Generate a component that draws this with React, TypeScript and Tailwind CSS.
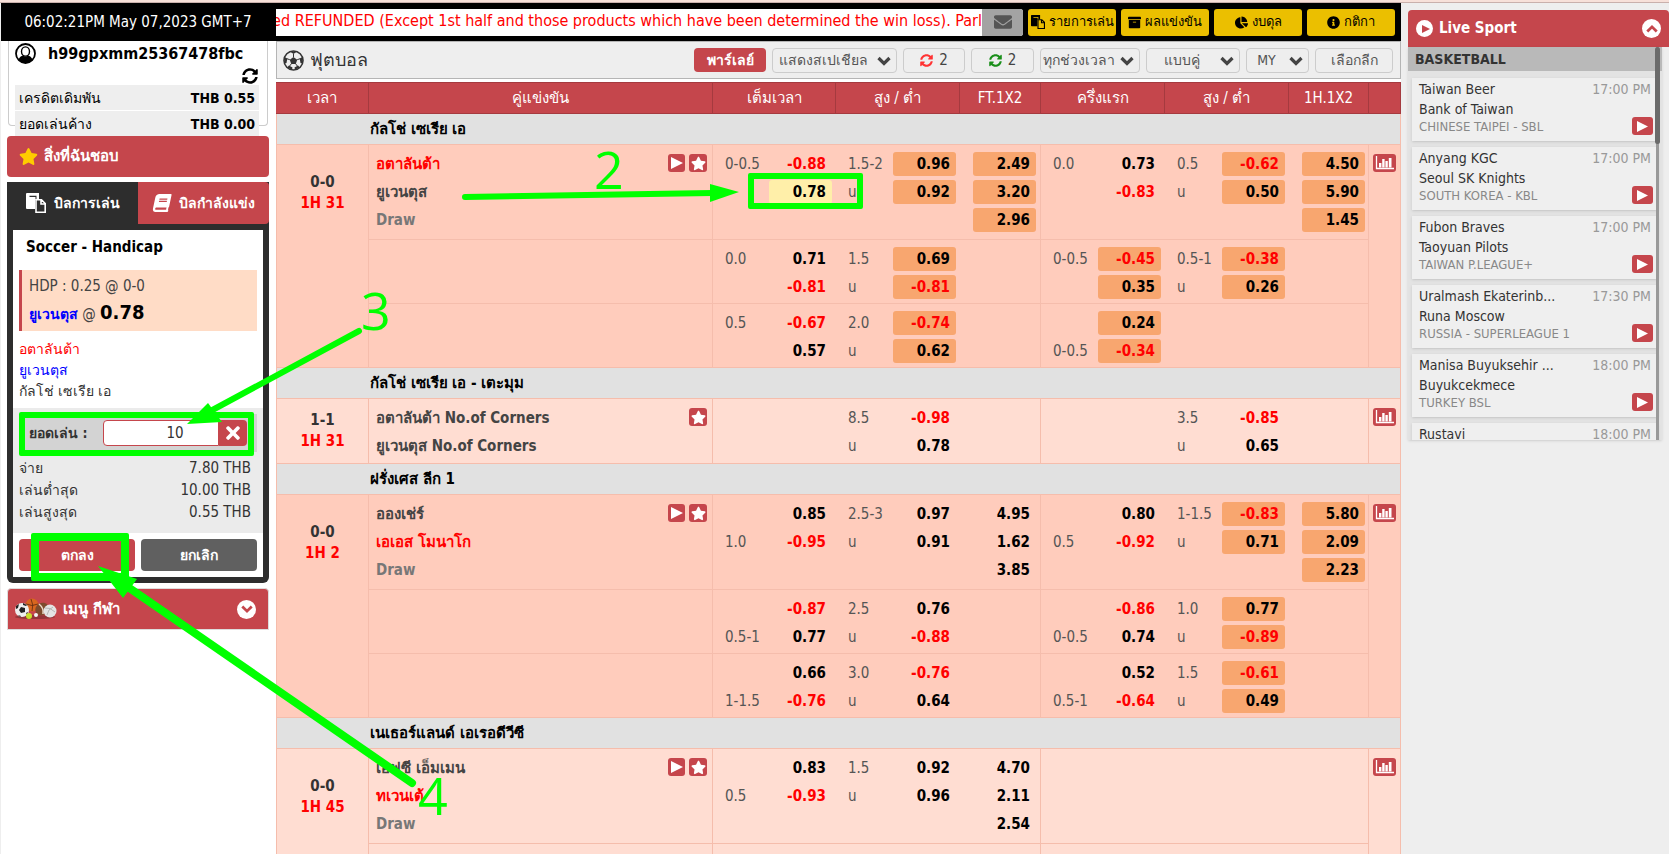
import React, { useState } from 'react';
import {
  FaArchive,
  FaBook,
  FaChartPie,
  FaEnvelope,
  FaInfoCircle,
  FaStar,
  FaSyncAlt,
  FaTimes,
} from 'react-icons/fa';

// [handicap, odds, highlighted]
type Line = [string, string, ('hot' | 'picked')?];

interface OddsRow {
  ft: Line[];
  ftOu: Line[];
  ftX: Line[];
  half: Line[];
  halfOu: Line[];
  halfX: Line[];
}

interface Match {
  score: string;
  time: string;
  home: string;
  away: string;
  favourite: 'home' | 'away' | 'none';
  draw: boolean;
  live: boolean;
  shade: 'dark' | 'light';
  rows: OddsRow[];
}

interface League {
  name: string;
  matches: Match[];
}

const LEAGUES: League[] = [
  {
    name: 'กัลโช่ เซเรีย เอ',
    matches: [
      {
        score: '0-0', time: '1H 31', home: 'อตาลันต้า', away: 'ยูเวนตุส', favourite: 'home', draw: true, live: true, shade: 'dark',
        rows: [
          {
            ft: [['0-0.5', '-0.88'], ['', '0.78', 'picked']],
            ftOu: [['1.5-2', '0.96', 'hot'], ['u', '0.92', 'hot']],
            ftX: [['', '2.49', 'hot'], ['', '3.20', 'hot'], ['', '2.96', 'hot']],
            half: [['0.0', '0.73'], ['', '-0.83']],
            halfOu: [['0.5', '-0.62', 'hot'], ['u', '0.50', 'hot']],
            halfX: [['', '4.50', 'hot'], ['', '5.90', 'hot'], ['', '1.45', 'hot']],
          },
          {
            ft: [['0.0', '0.71'], ['', '-0.81']],
            ftOu: [['1.5', '0.69', 'hot'], ['u', '-0.81', 'hot']],
            ftX: [],
            half: [['0-0.5', '-0.45', 'hot'], ['', '0.35', 'hot']],
            halfOu: [['0.5-1', '-0.38', 'hot'], ['u', '0.26', 'hot']],
            halfX: [],
          },
          {
            ft: [['0.5', '-0.67'], ['', '0.57']],
            ftOu: [['2.0', '-0.74', 'hot'], ['u', '0.62', 'hot']],
            ftX: [],
            half: [['', '0.24', 'hot'], ['0-0.5', '-0.34', 'hot']],
            halfOu: [],
            halfX: [],
          },
        ],
      },
    ],
  },
  {
    name: 'กัลโช่ เซเรีย เอ - เตะมุม',
    matches: [
      {
        score: '1-1', time: '1H 31', home: 'อตาลันต้า No.of Corners', away: 'ยูเวนตุส No.of Corners', favourite: 'none', draw: false, live: false, shade: 'light',
        rows: [
          {
            ft: [],
            ftOu: [['8.5', '-0.98'], ['u', '0.78']],
            ftX: [],
            half: [],
            halfOu: [['3.5', '-0.85'], ['u', '0.65']],
            halfX: [],
          },
        ],
      },
    ],
  },
  {
    name: 'ฝรั่งเศส ลีก 1',
    matches: [
      {
        score: '0-0', time: '1H 2', home: 'อองเช่ร์', away: 'เอเอส โมนาโก', favourite: 'away', draw: true, live: true, shade: 'dark',
        rows: [
          {
            ft: [['', '0.85'], ['1.0', '-0.95']],
            ftOu: [['2.5-3', '0.97'], ['u', '0.91']],
            ftX: [['', '4.95'], ['', '1.62'], ['', '3.85']],
            half: [['', '0.80'], ['0.5', '-0.92']],
            halfOu: [['1-1.5', '-0.83', 'hot'], ['u', '0.71', 'hot']],
            halfX: [['', '5.80', 'hot'], ['', '2.09', 'hot'], ['', '2.23', 'hot']],
          },
          {
            ft: [['', '-0.87'], ['0.5-1', '0.77']],
            ftOu: [['2.5', '0.76'], ['u', '-0.88']],
            ftX: [],
            half: [['', '-0.86'], ['0-0.5', '0.74']],
            halfOu: [['1.0', '0.77', 'hot'], ['u', '-0.89', 'hot']],
            halfX: [],
          },
          {
            ft: [['', '0.66'], ['1-1.5', '-0.76']],
            ftOu: [['3.0', '-0.76'], ['u', '0.64']],
            ftX: [],
            half: [['', '0.52'], ['0.5-1', '-0.64']],
            halfOu: [['1.5', '-0.61', 'hot'], ['u', '0.49', 'hot']],
            halfX: [],
          },
        ],
      },
    ],
  },
  {
    name: 'เนเธอร์แลนด์ เอเรอดีวีซี',
    matches: [
      {
        score: '0-0', time: '1H 45', home: 'เอฟซี เอ็มเมน', away: 'ทเวนเต้', favourite: 'away', draw: true, live: true, shade: 'light',
        rows: [
          {
            ft: [['', '0.83'], ['0.5', '-0.93']],
            ftOu: [['1.5', '0.92'], ['u', '0.96']],
            ftX: [['', '4.70'], ['', '2.11'], ['', '2.54']],
            half: [],
            halfOu: [],
            halfX: [],
          },
          { ft: [], ftOu: [], ftX: [], half: [], halfOu: [], halfX: [] },
        ],
      },
    ],
  },
];

const LIVE_GAMES = [
  { home: 'Taiwan Beer', away: 'Bank of Taiwan', league: 'CHINESE TAIPEI - SBL', time: '17:00 PM' },
  { home: 'Anyang KGC', away: 'Seoul SK Knights', league: 'SOUTH KOREA - KBL', time: '17:00 PM' },
  { home: 'Fubon Braves', away: 'Taoyuan Pilots', league: 'TAIWAN P.LEAGUE+', time: '17:00 PM' },
  { home: 'Uralmash Ekaterinb...', away: 'Runa Moscow', league: 'RUSSIA - SUPERLEAGUE 1', time: '17:30 PM' },
  { home: 'Manisa Buyuksehir ...', away: 'Buyukcekmece', league: 'TURKEY BSL', time: '18:00 PM' },
  { home: 'Rustavi', away: '', league: '', time: '18:00 PM' },
];

const PasteIcon: React.FC<{ size: number }> = ({ size }) => (
  <svg width={size} height={size} viewBox="0 0 20 20" className="shrink-0">
    <path d="M1 0h12v6h-2.500v-3.200h-7v1.200h6V7H9v9H1q-1 0-1-1V1q0-1 1-1z" fill="currentColor" />
    <path d="M10 6.800h5.500l3.700 3.700v8.700H10zM15 7v4h4" fill="none" stroke="currentColor" strokeWidth="1.600" />
  </svg>
);

const UserIcon = () => (
  <svg width="21" height="21" viewBox="0 0 21 21">
    <circle cx="10.500" cy="10.500" r="9.500" fill="#fff" stroke="#000" strokeWidth="1.800" />
    <path d="M3.500 16.500q1.500-3.500 4.500-4 2.500 2 5 0 3 .5 4.500 4-2.500 3.500-7 3.500t-7-3.500z" fill="#000" />
    <ellipse cx="10.500" cy="8.500" rx="4" ry="4.600" fill="#fff" stroke="#000" strokeWidth="1.400" />
  </svg>
);

const BallIcon = () => (
  <svg width="21" height="21" viewBox="0 0 21 21" className="text-[#333]">
    <circle cx="10.500" cy="10.500" r="9.500" fill="none" stroke="currentColor" strokeWidth="1.600" />
    <path d="m10.500 7 3.700 2.700-1.400 4.300H8.200L6.800 9.700z" fill="currentColor" />
    <path d="M10.500 7V4M14.200 9.700l3-1M12.800 14l2 2.600M8.200 14l-2 2.600M6.800 9.700l-3-1" stroke="currentColor" strokeWidth="1" />
    <path d="m7 1.500 3.500 2.500L14 1.500zM19.500 7l-2.800 1.500.8 4.500 2 .5zM17 17.500l-2-2-3.500 2 .5 2.300zM4 17.500l2-2 3.500 2-.5 2.300zM1.500 7l2.800 1.500-.8 4.500-2 .5z" fill="currentColor" />
  </svg>
);

const PlayIcon: React.FC<{ size: number }> = ({ size }) => (
  <svg width={size} height={size} viewBox="0 0 12 12" fill="currentColor">
    <path d="M0 0v12l12-6z" />
  </svg>
);

const Chevron: React.FC<{ size: number; className?: string }> = ({ size, className }) => (
  <svg width={size} height={size} viewBox="0 0 14 14" className={className}>
    <path d="M1.500 4 7 9.500 12.500 4" fill="none" stroke="currentColor" strokeWidth="3.200" />
  </svg>
);

const ChartIcon = () => (
  <svg width="23" height="18" viewBox="0 0 23 18" className="rounded-[3px] bg-[#c5464c]">
    <path d="M3.500 2v12.500H21" fill="none" stroke="#fff" strokeWidth="1.300" />
    <path d="M6 9h2.400v4.500H6zM9.200 5h2.400v8.500H9.200zM12.400 7h2.400v6.500h-2.400zM15.800 4h2.700v9.500h-2.700z" fill="#fff" />
  </svg>
);

const TOP_LINKS = [
  { label: 'รายการเล่น', icon: <PasteIcon size={14} /> },
  { label: 'ผลแข่งขัน', icon: <FaArchive size={13} /> },
  { label: 'งบดุล', icon: <FaChartPie size={13} /> },
  { label: 'กติกา', icon: <FaInfoCircle size={13} /> },
];

const OddsCell: React.FC<{ lines: Line[]; border?: boolean; pad?: string }> = ({ lines, border, pad = 'pr-1' }) => (
  <td className={`border-b border-[#f5bdac] p-0 align-top ${border ? 'border-r' : ''}`}>
    <div className={`flex flex-col gap-1 pt-[7px] pl-3 ${pad}`}>
      {lines.map(([hdp, odds, mark], i) => (
        <div key={i} className="flex h-6 items-center justify-between">
          <span className="text-[15px] leading-5 text-[#555]">{hdp}</span>
          <button
            type="button"
            className={`h-full w-[63px] rounded-[3px] pr-[6px] text-right text-[15px] font-bold ${
              mark === 'hot' ? 'bg-[#f8a66f]' : mark === 'picked' ? 'bg-[#ffefa9]' : ''
            } ${odds.startsWith('-') ? 'text-[#f00]' : 'text-black'}`}
          >
            {odds}
          </button>
        </div>
      ))}
    </div>
  </td>
);

const MatchRows: React.FC<{ match: Match }> = ({ match }) => {
  const bg = match.shade === 'dark' ? 'bg-[#ffccbc]' : 'bg-[#ffddd2]';
  return (
    <>
      {match.rows.map((row, i) => {
        const height = i === 0 && match.draw ? 'h-[95px]' : 'h-16';
        return (
          <tr key={i} className={`${bg} ${height}`}>
            {i === 0 && (
              <td rowSpan={match.rows.length} className="border-x border-b border-[#f5bdac] p-0 align-top">
                <div className={`flex flex-col items-center justify-center text-[15px] leading-[21px] font-bold ${height}`}>
                  <span className="text-[#333]">{match.score}</span>
                  <span className="text-[#f00]">{match.time}</span>
                </div>
              </td>
            )}
            <td className="border-r border-b border-[#f5bdac] p-0 align-top">
              {i === 0 && (
                <div className="flex justify-between pt-[5px] pr-[5px] pl-[7px]">
                  <div className="flex flex-col text-[15px] leading-7 font-bold text-[#444]">
                    <span className={match.favourite === 'home' ? 'text-[#f00]' : ''}>{match.home}</span>
                    <span className={match.favourite === 'away' ? 'text-[#f00]' : ''}>{match.away}</span>
                    {match.draw && <span className="text-[#777]">Draw</span>}
                  </div>
                  <div className="flex gap-1 pt-1">
                    {match.live && (
                      <button type="button" aria-label="Watch" className="flex h-[18px] w-[17px] items-center justify-center rounded-[3px] bg-[#c5464c] pl-px text-white">
                        <PlayIcon size={12} />
                      </button>
                    )}
                    <button type="button" aria-label="Favourite" className="flex h-[18px] w-[18px] items-center justify-center rounded-[3px] bg-[#c5464c] text-white">
                      <FaStar size={15} />
                    </button>
                  </div>
                </div>
              )}
            </td>
            <OddsCell lines={row.ft} />
            <OddsCell lines={row.ftOu} />
            <OddsCell lines={row.ftX} border />
            <OddsCell lines={row.half} />
            <OddsCell lines={row.halfOu} />
            <OddsCell lines={row.halfX} border pad="pr-[3px]" />
            {i === 0 && (
              <td rowSpan={match.rows.length} className="border-r border-b border-[#f5bdac] p-0 align-top">
                <button type="button" aria-label="Statistics" className="mt-[9px] ml-1 block">
                  <ChartIcon />
                </button>
              </td>
            )}
          </tr>
        );
      })}
    </>
  );
};

const Dropdown: React.FC<{ label: string; value: string; width: string }> = ({ label, value, width }) => (
  <div className={`relative h-[25px] ${width}`}>
    <select aria-label={label} className="h-full w-full appearance-none rounded border border-[#ccc] bg-[#eee] pr-[22px] text-center text-sm text-[#555]">
      <option>{value}</option>
    </select>
    <Chevron size={14} className="pointer-events-none absolute top-[6px] right-[6px] text-[#444]" />
  </div>
);

const BallsIcon = () => (
  <svg width="43" height="22" viewBox="0 0 43 22">
    <ellipse cx="21" cy="19" rx="20" ry="2" fill="#000" opacity=".25" />
    <circle cx="18" cy="7" r="6.500" fill="#d9661f" />
    <path d="M12 6q6 3 12 0M17 1q3 6 1 12" fill="none" stroke="#5c2a10" strokeWidth=".8" />
    <ellipse cx="28" cy="11" rx="7" ry="6" fill="#7d4a2c" transform="rotate(-30 28 11)" />
    <path d="M25 6q5 4 4 10" fill="none" stroke="#ead9c8" strokeWidth="1.500" />
    <circle cx="8" cy="12" r="7" fill="#eee" />
    <path d="m7 9 4 1 0 4-4 1-2-3zM2 8l3-2-1 4-2 1zM9 5l4 2-1 1-3-1zM4 17l3 1-1 1zM12 15l2-1-1 3z" fill="#222" />
    <circle cx="36" cy="13" r="6.500" fill="#e4e4e4" />
    <path d="M31 10q5-1 10 4M33 17q1-6 6-8" fill="none" stroke="#aaa" strokeWidth=".8" />
    <circle cx="15" cy="18" r="3" fill="#c8e02a" />
    <circle cx="22" cy="17" r="2" fill="#f4f4f4" />
  </svg>
);

const BetSlip: React.FC = () => {
  const [stake, setStake] = useState('10');

  return (
    <section className="mt-[5px] rounded-b-md bg-[#2d2d2d] pb-[6px]">
      <div className="flex h-[42px] overflow-hidden rounded-t text-sm font-bold text-white">
        <button type="button" className="flex flex-1 items-center justify-center gap-2 bg-[#2d2d2d]">
          <PasteIcon size={20} />บิลการเล่น
        </button>
        <button type="button" className="flex flex-1 items-center justify-center gap-2 rounded-br bg-[#c5464c]">
          <FaBook size={18} className="-skew-x-12" />บิลกำลังแข่ง
        </button>
      </div>
      <div className="mx-[6px] mt-[6px] bg-white">
        <h2 className="h-10 pl-[13px] text-[15px] leading-[34px] font-bold text-black">Soccer - Handicap</h2>
        <div className="mx-[6px] h-[61px] border-l-[3px] border-[#c5464c] bg-[#ffdcc6] pl-[7px] text-[#444]">
          <p className="pt-1 text-[15px] leading-6">HDP : 0.25 @ 0-0</p>
          <p className="text-[15px] leading-7">
            <b className="text-[14px] text-[#00f]">ยูเวนตุส</b> @ <b className="text-xl leading-7 text-black">0.78</b>
          </p>
        </div>
        <div className="flex h-[77px] flex-col pt-2 pl-[6px] text-sm leading-[21px] text-[#333]">
          <span className="text-[#f00]">อตาลันต้า</span>
          <span className="text-[#00f]">ยูเวนตุส</span>
          <span>กัลโช่ เซเรีย เอ</span>
        </div>
        <div className="bg-[#ebebeb] px-[6px] pt-[6px] pb-[10px]">
          <div className="flex h-[38px] items-center bg-[#d3d3d3] pr-[10px] pl-[10px]">
            <label htmlFor="stake" className="w-[74px] text-sm font-bold whitespace-nowrap text-[#333]">ยอดเล่น :</label>
            <input
              id="stake"
              value={stake}
              onChange={(e) => setStake(e.target.value)}
              className="h-[26px] min-w-0 flex-1 rounded-l border border-[#c5464c] bg-white pl-7 text-center text-[15px] text-[#333]"
            />
            <button type="button" aria-label="Clear" onClick={() => setStake('')} className="flex h-[26px] w-7 items-center justify-center rounded-r bg-[#c5464c] text-white">
              <FaTimes size={20} />
            </button>
          </div>
          <dl className="grid grid-cols-[auto_1fr] pt-[5px] pr-[6px] text-sm leading-[22px] text-[#333]">
            <dt>จ่าย</dt>
            <dd className="text-right text-[15px]">7.80 THB</dd>
            <dt>เล่นต่ำสุด</dt>
            <dd className="text-right text-[15px]">10.00 THB</dd>
            <dt>เล่นสูงสุด</dt>
            <dd className="text-right text-[15px]">0.55 THB</dd>
          </dl>
        </div>
        <div className="grid h-[44px] grid-cols-2 gap-[6px] p-[6px] text-sm font-bold text-white">
          <button type="button" className="rounded bg-[#c5464c]">ตกลง</button>
          <button type="button" className="rounded bg-[#606060]">ยกเลิก</button>
        </div>
      </div>
    </section>
  );
};

const LiveSport: React.FC = () => (
  <aside className="w-[268px] shrink-0 pt-[7px] pl-[7px]">
    <header className="flex h-[37px] items-center gap-[6px] rounded-t bg-[#c5464c] pr-2 pl-2 text-white">
      <span className="flex h-[17px] w-[17px] items-center justify-center rounded-full bg-white pl-[2px] text-[#c5464c]">
        <PlayIcon size={8} />
      </span>
      <h2 className="flex-1 text-[15px] font-bold">Live Sport</h2>
      <button type="button" aria-label="Collapse" className="flex h-[19px] w-[19px] items-center justify-center rounded-full bg-white text-[#c5464c]">
        <Chevron size={12} className="rotate-180" />
      </button>
    </header>
    <div className="relative mr-[7px] h-[393px] overflow-hidden bg-[#e3e3e3] shadow">
      <h3 className="h-6 bg-[#b9b9b9] pl-[7px] text-sm leading-6 font-bold text-[#333]">BASKETBALL</h3>
      <ul className="flex flex-col gap-[6px] px-1 pt-[7px]">
        {LIVE_GAMES.map((game) => (
          <li key={game.home} className="flex h-[63px] shrink-0 justify-between bg-[#efefef] pr-[5px] pl-[7px] shadow-sm">
            <div className="pt-px text-sm leading-5 text-[#333]">
              <p>{game.home}</p>
              <p>{game.away}</p>
              <p className="text-[13px] leading-4 text-[#888]">{game.league}</p>
            </div>
            <div className="flex flex-col items-end justify-between pt-px pb-[6px]">
              <span className="pr-[2px] text-sm leading-5 text-[#999]">{game.time}</span>
              <button type="button" aria-label="Play" className="flex h-[18px] w-[21px] items-center justify-center rounded-[3px] bg-[#c5464c] text-white">
                <PlayIcon size={11} />
              </button>
            </div>
          </li>
        ))}
      </ul>
      {/* scrollbar */}
      <div className="absolute top-0 right-[2px] flex h-full w-[5px] justify-center">
        <div className="h-full w-[3px] bg-[#999]" />
        <div className="absolute top-0 h-[97px] w-[5px] rounded bg-[#6b6b6b]" />
      </div>
    </div>
  </aside>
);

const Guide: React.FC = () => (
  <div className="pointer-events-none absolute inset-0 font-['Open_Sans',sans-serif] text-[52px] leading-none font-medium text-[#0f0]">
    <svg className="absolute top-0 left-0" width="900" height="854" fill="#0f0" stroke="#0f0" strokeLinecap="round">
      <path d="M465 197 712 193" strokeWidth="6" />
      <path d="M710 184 739 192 710 202z" stroke="none" />
      <path d="M359 331 205 414" strokeWidth="6" />
      <path d="M208 403 187 424 222 422z" stroke="none" />
      <path d="M412 783 125 585" strokeWidth="8" />
      <path d="M98 566 137 579 123 598z" stroke="none" />
    </svg>
    <div className="absolute top-[173px] left-[748px] h-9 w-[115px] rounded-[2px] border-[6px] border-[#0f0]" />
    <div className="absolute top-[412px] left-[19px] h-[44px] w-[235px] rounded-[2px] border-[6px] border-[#0f0]" />
    <div className="absolute top-[533px] left-[31px] h-[48px] w-[98px] rounded-[2px] border-8 border-[#0f0]" />
    <span className="absolute top-[143px] left-[594px]">2</span>
    <span className="absolute top-[284px] left-[361px]">3</span>
    <span className="absolute top-[769px] left-[418px]">4</span>
  </div>
);

const App: React.FC = () => (
  <div className="relative flex h-screen flex-col overflow-hidden bg-[#eee] font-['DejaVu_Sans_Condensed','Noto_Sans',sans-serif]">
    <div className="h-[3px] shrink-0 border-b border-[#c9b0ac] bg-[#f7e0d9]" />
    <div className="flex min-h-0 flex-1">
      <div className="ml-px flex min-w-0 flex-1 flex-col bg-white">
        <header className="flex h-[38px] shrink-0 items-center gap-[5px] bg-black pr-[6px]">
          <time className="w-[270px] shrink-0 pl-1 text-center text-[15px] font-medium text-white">06:02:21PM May 07,2023 GMT+7</time>
          <div className="flex h-[27px] min-w-0 flex-1 overflow-hidden rounded-r-[3px] bg-white">
            <p className="flex min-w-0 flex-1 justify-end overflow-hidden text-base leading-6 whitespace-nowrap text-[#f00]">
              ed REFUNDED (Except 1st half and those products which have been determined the win loss). Parl
            </p>
            <button type="button" aria-label="Messages" className="flex w-[41px] shrink-0 items-center justify-center bg-[#a3a3a3] text-[#555]">
              <FaEnvelope size={18} />
            </button>
          </div>
          <nav className="grid shrink-0 grid-cols-4 gap-[5px]">
            {TOP_LINKS.map((link) => (
              <a key={link.label} href="#" className="flex h-[27px] w-[88px] items-center justify-center gap-1 rounded-[3px] bg-[#ebbf00] text-[13px] whitespace-nowrap text-black">
                {link.icon}
                {link.label}
              </a>
            ))}
          </nav>
        </header>

        <div className="flex min-h-0 flex-1">
          <aside className="w-[275px] shrink-0 pr-[7px] pl-[6px]">
            <div className="h-[95px]">
              <div className="mx-px h-[85px] rounded-b border-x border-b border-[#ccc] px-[6px]">
                <div className="flex h-[25px] items-center gap-3 text-base font-bold text-black">
                  <UserIcon />h99gpxmm25367478fbc
                </div>
                <div className="flex h-[19px] justify-end pr-[3px]">
                  <button type="button" aria-label="Refresh"><FaSyncAlt size={16} /></button>
                </div>
                <dl className="relative flex flex-col gap-px pr-[2px] text-sm text-black">
                  <div className="flex h-[25px] items-center justify-between bg-[#eee] px-1">
                    <dt>เครดิตเดิมพัน</dt>
                    <dd className="font-bold">THB 0.55</dd>
                  </div>
                  <div className="flex h-[25px] items-center justify-between bg-[#eee] px-1">
                    <dt>ยอดเล่นค้าง</dt>
                    <dd className="font-bold">THB 0.00</dd>
                  </div>
                </dl>
              </div>
            </div>
            <button type="button" className="flex h-[41px] w-full items-center gap-[6px] rounded bg-[#c5464c] pl-3 text-[15px] font-bold text-white">
              <FaStar size={19} className="text-[#fc0]" />สิ่งที่ฉันชอบ
            </button>
            <BetSlip />
            <button type="button" className="mt-[5px] flex h-[42px] w-full items-center gap-[6px] rounded-t border border-[#ddd] bg-[#c5464c] pr-3 pl-[6px] text-[15px] font-bold text-white">
              <BallsIcon />
              <span className="flex-1 text-left">เมนู กีฬา</span>
              <span className="flex h-[19px] w-[19px] items-center justify-center rounded-full bg-white text-[#c5464c]">
                <Chevron size={12} />
              </span>
            </button>
          </aside>

          <main className="min-w-0 flex-1">
            <div className="flex h-[38px] items-center gap-[6px] border border-[#b5b5b5] bg-[#eee] pr-[7px] pl-[6px]">
              <BallIcon />
              <h1 className="flex-1 text-lg leading-6 font-medium text-[#333]">ฟุตบอล</h1>
              <button type="button" className="h-6 w-[72px] rounded bg-[#c5464c] text-sm font-bold text-white">พาร์เลย์</button>
              <Dropdown label="Special" value="แสดงสเปเชียล" width="w-[125px]" />
              <button type="button" className="flex h-[25px] w-[62px] items-center justify-center gap-[6px] rounded border border-[#ccc] text-[15px] text-[#444]">
                <FaSyncAlt size={13} className="text-[#f33]" />2
              </button>
              <button type="button" className="flex h-[25px] w-[63px] items-center justify-center gap-[6px] rounded border border-[#ccc] text-[15px] text-[#444]">
                <FaSyncAlt size={13} className="text-[#1a8f1a]" />2
              </button>
              <Dropdown label="Period" value="ทุกช่วงเวลา" width="w-[100px]" />
              <Dropdown label="Line" value="แบบคู่" width="w-[94px]" />
              <Dropdown label="Odds type" value="MY" width="w-[63px]" />
              <button type="button" className="h-[25px] w-[78px] rounded border border-[#ccc] text-sm text-[#555]">เลือกลีก</button>
            </div>

            <table className="mt-[3px] w-full table-fixed border-separate border-spacing-0">
              <colgroup>
                <col className="w-[93px]" />
                <col />
                <col className="w-[123px]" />
                <col className="w-[124px]" />
                <col className="w-[81px]" />
                <col className="w-[124px]" />
                <col className="w-[124px]" />
                <col className="w-20" />
                <col className="w-8" />
              </colgroup>
              <thead>
                <tr className="h-8 bg-[#c5464c] text-[15px] text-white">
                  {['เวลา', 'คู่แข่งขัน', 'เต็มเวลา', 'สูง / ต่ำ', 'FT.1X2', 'ครึ่งแรก', 'สูง / ต่ำ', '1H.1X2', ''].map((title, i) => (
                    <th key={i} className="border-y border-r border-[#a53a3f] p-0 font-medium">{title}</th>
                  ))}
                </tr>
              </thead>
              <tbody>
                {LEAGUES.map((league) => (
                  <React.Fragment key={league.name}>
                    <tr className="h-[31px] bg-[#e1e1e1]">
                      <td className="border-b border-l border-[#f5bdac] p-0" />
                      <td colSpan={8} className="border-r border-b border-[#f5bdac] p-0 pl-px text-[15px] leading-5 font-bold text-black">
                        {league.name}
                      </td>
                    </tr>
                    {league.matches.map((match) => (
                      <MatchRows key={match.home} match={match} />
                    ))}
                  </React.Fragment>
                ))}
              </tbody>
            </table>
          </main>
        </div>
      </div>
      <LiveSport />
    </div>
    <Guide />
  </div>
);

export default App;
